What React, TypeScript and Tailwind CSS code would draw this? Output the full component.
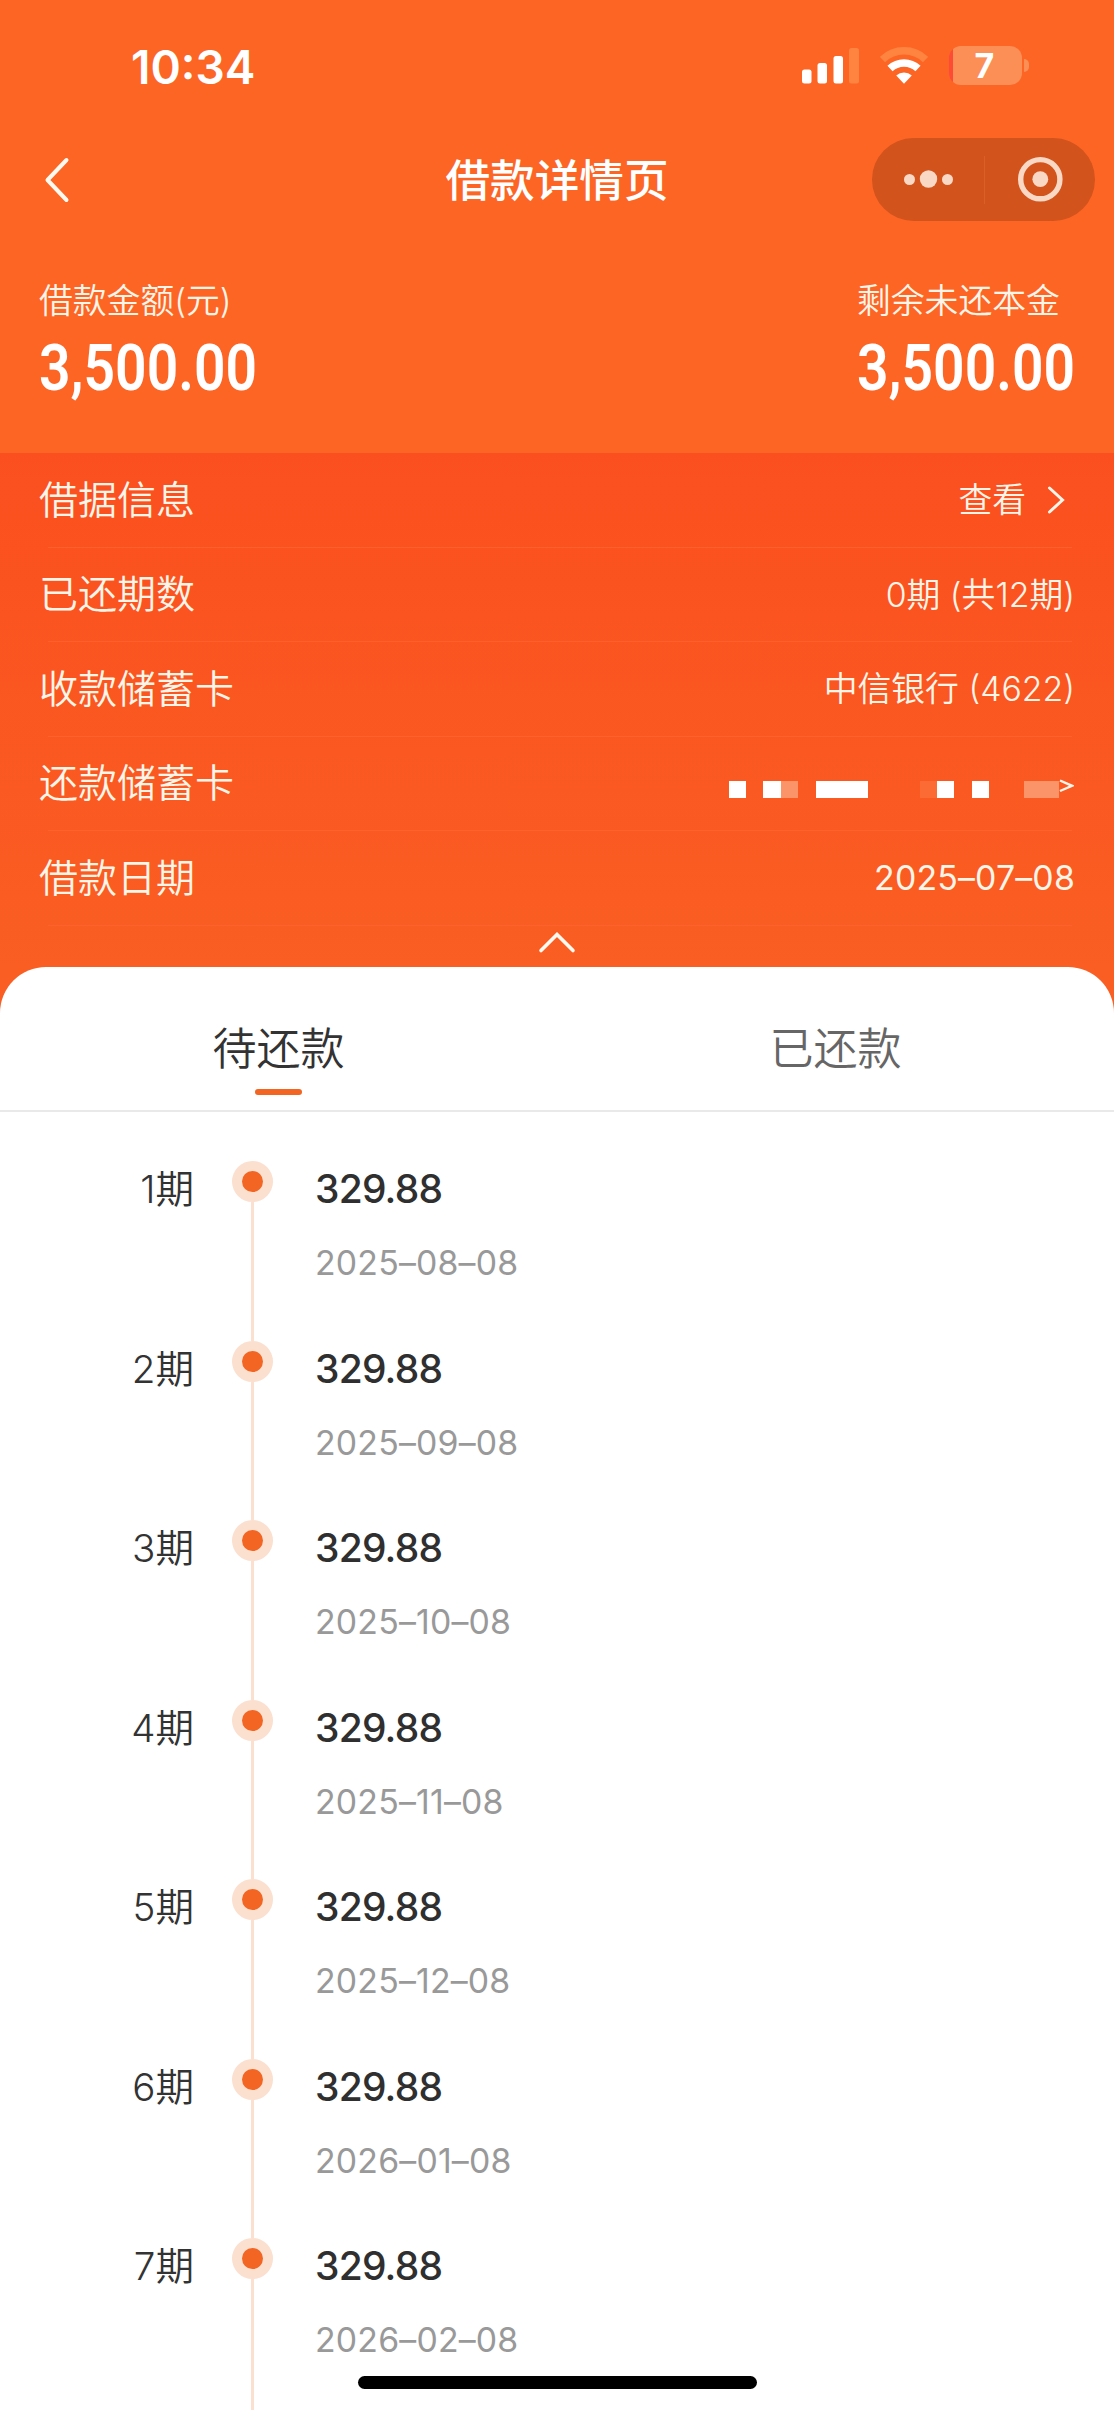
import React from "react";

const FONT = "font-['Inter','Noto_Sans_CJK_SC',sans-serif]";

const installments = [
  { term: "1期", amount: "329.88", date: "2025–08–08" },
  { term: "2期", amount: "329.88", date: "2025–09–08" },
  { term: "3期", amount: "329.88", date: "2025–10–08" },
  { term: "4期", amount: "329.88", date: "2025–11–08" },
  { term: "5期", amount: "329.88", date: "2025–12–08" },
  { term: "6期", amount: "329.88", date: "2026–01–08" },
  { term: "7期", amount: "329.88", date: "2026–02–08" },
];

function StatusBar() {
  return (
    <div className="flex h-[131px] items-start justify-between pl-[131px] pr-[85px]">
      <div className="mt-[39px] text-[46px] leading-[56px] font-semibold">10:34</div>
      <div className="mt-[46px] flex items-start">
        <svg width="58" height="40" viewBox="0 0 58 40" className="mr-[21px]" fill="#fff">
          <rect x="1" y="23.5" width="9.5" height="14" rx="2.5" />
          <rect x="16.5" y="17" width="9.5" height="20.5" rx="2.5" />
          <rect x="32.5" y="10" width="9.5" height="27.5" rx="2.5" />
          <rect x="48" y="2" width="10" height="35.5" rx="2.5" fill="#ff843f" />
        </svg>
        <svg width="48" height="40" viewBox="0 0 48 40" className="mr-[21px]" fill="none">
          <path d="M2.5 13.5 A31 31 0 0 1 45.5 13.5" stroke="#ff843f" strokeWidth="7.5" />
          <path d="M10 22.5 A20.5 20.5 0 0 1 38 22.5" stroke="#fff" strokeWidth="7.5" />
          <path d="M16.2 29.5 A11.5 11.5 0 0 1 31.8 29.5 L24 37.7 Z" fill="#fff" />
        </svg>
        <div className="flex h-[39px] w-[73px] items-center justify-center overflow-hidden rounded-[12px] bg-linear-to-r from-[#fe4b35] from-[4px] to-[#fb8f55] to-[4px] pr-[2px] text-[34px] leading-none font-bold">
          7
        </div>
        <div className="mt-[13px] ml-[2px] h-[13px] w-[5px] rounded-r-full bg-[#fb8f55]" />
      </div>
    </div>
  );
}

function NavBar() {
  return (
    <div className="grid h-[97px] grid-cols-[223px_1fr_223px] items-center px-[19px]">
      <svg width="30" height="50" viewBox="0 0 30 50" className="ml-[25px]" fill="none">
        <path d="M22.5 5 L3.5 25 L22.5 45" stroke="#fffaf0" strokeWidth="4" strokeLinecap="round" strokeLinejoin="round" />
      </svg>
      <div className="mt-[3px] text-center text-[44.6px] leading-[60px] font-medium">借款详情页</div>
      <div className="flex h-[83px] items-center rounded-full bg-[#d3531c]">
        <svg width="112" height="83" viewBox="0 0 112 83" fill="#f9d9c5">
          <circle cx="37.5" cy="41.5" r="5.5" />
          <circle cx="56.5" cy="41" r="8.7" />
          <circle cx="75.5" cy="41.5" r="5.5" />
        </svg>
        <div className="h-[48px] w-px bg-[#dc5f29]" />
        <svg width="110" height="83" viewBox="0 0 110 83">
          <circle cx="55.3" cy="41.2" r="19.6" fill="none" stroke="#f9d9c5" strokeWidth="5.4" />
          <circle cx="55.3" cy="41.2" r="7.9" fill="#f9d9c5" />
        </svg>
      </div>
    </div>
  );
}

function Amount({ label, value }: { label: string; value: string }) {
  return (
    <div className="w-[218px]">
      <div className="text-[33.8px] leading-[48px] font-[350] whitespace-nowrap text-[#fff5e8]">{label}</div>
      <div className="mt-[13px] origin-left scale-x-[0.85] font-[Roboto] text-[65px] leading-[60px] font-semibold whitespace-nowrap">
        {value}
      </div>
    </div>
  );
}

function InfoRow({ label, children }: { label: string; children: React.ReactNode }) {
  return (
    <div>
      <div className="flex h-[93.5px] items-center justify-between">
        <div className="text-[39px] leading-[56px] font-[350]">{label}</div>
        <div className="flex items-center pt-px text-[33.8px] leading-[48px] font-[350]">{children}</div>
      </div>
      <div className="mr-[3px] ml-[9px] h-px bg-[#ff6530]/70" />
    </div>
  );
}

function MaskedCard() {
  return (
    <div className="mt-[12px] mr-[1px] flex items-start">
      <div className="flex h-[17px]">
        <div className="w-[17px] bg-white" />
        <div className="ml-[17px] w-[18px] bg-white" />
        <div className="w-[17px] bg-[#fb9468]" />
        <div className="ml-[18px] w-[52px] bg-white" />
        <div className="ml-[52px] w-[17px] bg-[#fc6b33]" />
        <div className="w-[17px] bg-white" />
        <div className="ml-[18px] w-[17px] bg-white" />
        <div className="ml-[35px] w-[35px] bg-[#fb9468]" />
      </div>
      <svg width="15" height="14" viewBox="0 0 15 14" fill="none" className="-mt-[2px]">
        <path d="M1 1.5 L13 6.8 L1 12" stroke="#fff5e8" strokeWidth="2.4" />
      </svg>
    </div>
  );
}

function Tabs() {
  return (
    <div className="grid h-[145px] grid-cols-2 border-b-2 border-[#e9e9e9] text-[44px] leading-[60px]">
      <div className="flex flex-col items-center pt-[52px] text-[#333]">
        <div className="font-[350]">待还款</div>
        <div className="mt-[10px] h-[6px] w-[47px] rounded-full bg-[#f26522]" />
      </div>
      <div className="flex flex-col items-center pt-[52px] font-[350] text-[#666]">已还款</div>
    </div>
  );
}

function Installment({ term, amount, date }: { term: string; amount: string; date: string }) {
  return (
    <div className="flex h-[179.5px] shrink-0">
      <div className="w-[194px] text-right text-[38.6px] leading-[56px] font-[350] text-[#333]">{term}</div>
      <div className="ml-[38px] flex w-[41px] flex-col items-center">
        <div className="flex size-[41px] shrink-0 items-center justify-center rounded-full bg-[#fbdfcf]">
          <div className="size-[21px] rounded-full bg-[#f26522]" />
        </div>
        <div className="w-[3px] grow bg-[#fbdfcf]" />
      </div>
      <div className="ml-[42px]">
        <div className="text-[39px] leading-[56px] font-medium tracking-[-0.8px] text-[#2f2f2f]">{amount}</div>
        <div className="mt-[22px] text-[33.8px] leading-[48px] tracking-[0.2px] text-[#999]">{date}</div>
      </div>
    </div>
  );
}

export default function App() {
  return (
    <div className={`flex h-[2410px] w-[1114px] flex-col overflow-hidden bg-[#fd6525] text-white ${FONT}`}>
      <StatusBar />
      <NavBar />
      <div className="flex h-[225px] shrink-0 justify-between px-[39px] pt-[49px]">
        <Amount label="借款金额(元)" value="3,500.00" />
        <Amount label="剩余未还本金" value="3,500.00" />
      </div>
      <div className="h-[514px] shrink-0 bg-linear-to-b from-[#fb4f1f] to-[#fa5e22] px-[39px] text-[#fff5e8]">
        <InfoRow label="借据信息">
          查看
          <svg width="20" height="30" viewBox="0 0 20 30" fill="none" className="mr-[9px] ml-[20px]">
            <path d="M3.5 3 L16.5 15 L3.5 27" stroke="#fff5e8" strokeWidth="3" strokeLinecap="round" />
          </svg>
        </InfoRow>
        <InfoRow label="已还期数">0期 (共12期)</InfoRow>
        <InfoRow label="收款储蓄卡">中信银行 (4622)</InfoRow>
        <InfoRow label="还款储蓄卡">
          <MaskedCard />
        </InfoRow>
        <InfoRow label="借款日期">
          <span className="font-normal tracking-[0.2px]">2025–07–08</span>
        </InfoRow>
        <svg width="40" height="26" viewBox="0 0 40 26" fill="none" className="mx-auto mt-[3px]">
          <path d="M4 21.5 L20 5.5 L36 21.5" stroke="#fffaf0" strokeWidth="3.6" strokeLinecap="round" />
        </svg>
      </div>
      <div className="flex shrink-0 bg-[#fa5e22]">
        <div className="w-full rounded-t-[46px] bg-white">
          <Tabs />
        </div>
      </div>
      <div className="relative flex h-[1298px] shrink-0 flex-col bg-white pt-[49px]">
        {installments.map((item) => (
          <Installment key={item.term} {...item} />
        ))}
        <div className="absolute bottom-[21px] left-[358px] h-[13px] w-[399px] rounded-full bg-black" />
      </div>
    </div>
  );
}
